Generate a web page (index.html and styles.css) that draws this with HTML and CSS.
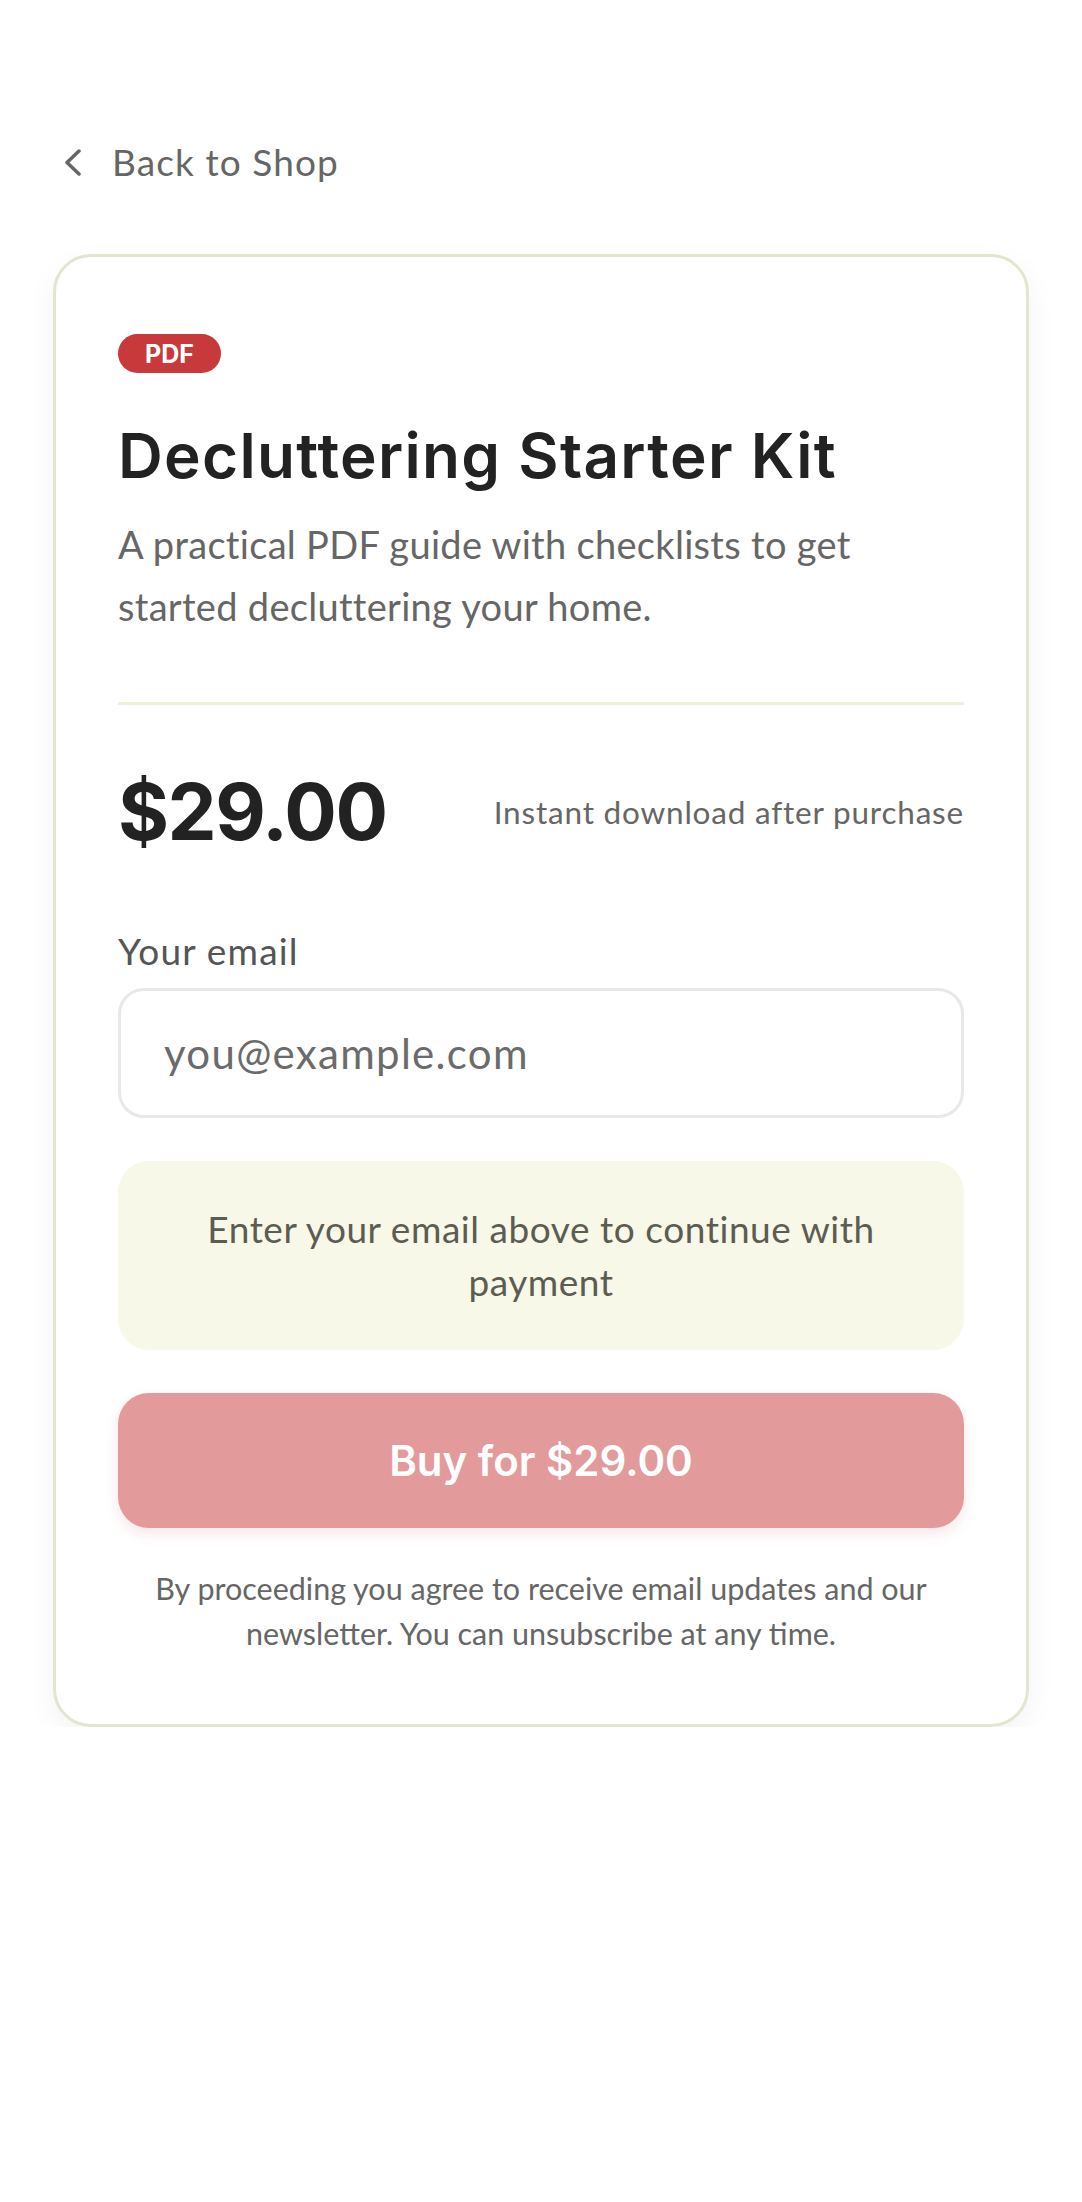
FILE: index.html
```html
<!DOCTYPE html>
<html lang="en">
<head>
<meta charset="utf-8">
<title>Decluttering Starter Kit</title>
<link rel="stylesheet" href="styles.css">
</head>
<body>
<div class="page">
  <a class="back" href="#">
    <svg class="back-icon" viewBox="0 0 16 27" width="16" height="27" aria-hidden="true">
      <polyline points="14,2 2,13.5 14,25" fill="none" stroke="#666666" stroke-width="3.5" stroke-linecap="round" stroke-linejoin="round"/>
    </svg>
    <span>Back to Shop</span>
  </a>

  <div class="card">
    <span class="badge">PDF</span>
    <h1 class="title">Decluttering Starter Kit</h1>
    <p class="desc">A practical PDF guide with checklists to get started decluttering your home.</p>
    <div class="divider"></div>
    <div class="price-row">
      <span class="price">$29.00</span>
      <span class="instant">Instant download after purchase</span>
    </div>
    <label class="label" for="email">Your email</label>
    <input class="input" id="email" type="email" placeholder="you@example.com">
    <div class="notice">Enter your email above to continue with payment</div>
    <button class="buy" type="button" disabled>Buy for $29.00</button>
    <p class="fine">By proceeding you agree to receive email updates and our newsletter. You can unsubscribe at any time.</p>
  </div>
</div>
</body>
</html>
```
FILE: styles.css
```css
* { box-sizing: border-box; }
html, body { margin: 0; padding: 0; background: #ffffff; }
body { font-family: "Lato", "Liberation Sans", sans-serif; color: #666666; }

.page { padding: 0 53px; }

.back {
  display: flex;
  align-items: center;
  gap: 31px;
  padding: 140px 0 0 12px;
  height: 184px;
  text-decoration: none;
  color: #666666;
  font-size: 37px;
  line-height: 44px;
  letter-spacing: 1.1px;
}
.back-icon { display: block; width: 16px; height: 27px; }

.card {
  margin-top: 70px;
  border: 3px solid #e4e5cf;
  border-radius: 38px;
  padding: 77px 62px 68px;
  background: #ffffff;
  box-shadow: 0 10px 30px rgba(0, 0, 0, 0.05);
  display: flex;
  flex-direction: column;
  align-items: stretch;
}

.badge {
  align-self: flex-start;
  display: inline-flex;
  align-items: center;
  height: 39px;
  padding: 0 27px;
  border-radius: 999px;
  background: #c8393c;
  color: #ffffff;
  font-family: "Inter", "Liberation Sans", sans-serif;
  font-weight: 700;
  font-size: 25px;
}

.title {
  margin: 43px 0 0;
  font-family: "Inter", "Liberation Sans", sans-serif;
  font-weight: 600;
  font-size: 62px;
  line-height: 79px;
  color: #222222;
  letter-spacing: 1.3px;
}

.desc {
  margin: 18px 0 0;
  font-size: 38px;
  line-height: 62px;
  color: #666666;
  letter-spacing: 0.3px;
}

.divider {
  margin-top: 65px;
  height: 3px;
  background: #eef0dc;
}

.price-row {
  margin-top: 67px;
  display: flex;
  align-items: center;
  justify-content: space-between;
  height: 79px;
}
.price {
  font-family: "Inter", "Liberation Sans", sans-serif;
  font-weight: 700;
  font-size: 78px;
  line-height: 79px;
  color: #222222;
  letter-spacing: -1.5px;
}
.instant {
  font-size: 31.5px;
  color: #666666;
  letter-spacing: 0.8px;
}

.label {
  margin-top: 72px;
  font-size: 37px;
  line-height: 55px;
  color: #555555;
  letter-spacing: 1.2px;
}

.input {
  margin-top: 10px;
  height: 130px;
  width: 100%;
  border: 3px solid #e8e8e8;
  border-radius: 26px;
  padding: 0 43px;
  font-family: "Lato", "Liberation Sans", sans-serif;
  font-size: 42px;
  letter-spacing: 1.3px;
  color: #333333;
  background: #ffffff;
  outline: none;
}
.input::placeholder { color: #6b6b6b; }

.notice {
  margin-top: 43px;
  padding: 42px;
  border-radius: 31px;
  background: #f7f8e8;
  color: #5c5c52;
  font-size: 37px;
  line-height: 52.5px;
  text-align: center;
  letter-spacing: 0.55px;
}

.buy {
  margin-top: 43px;
  height: 135px;
  width: 100%;
  border: 0;
  border-radius: 31px;
  background: #e39a9b;
  color: #ffffff;
  font-family: "Inter", "Liberation Sans", sans-serif;
  font-weight: 600;
  font-size: 42px;
  box-shadow: 0 6px 14px rgba(200, 57, 60, 0.12);
}

.fine {
  margin: 38px 0 0;
  font-size: 30.5px;
  line-height: 45px;
  text-align: center;
  color: #666666;
}
```
